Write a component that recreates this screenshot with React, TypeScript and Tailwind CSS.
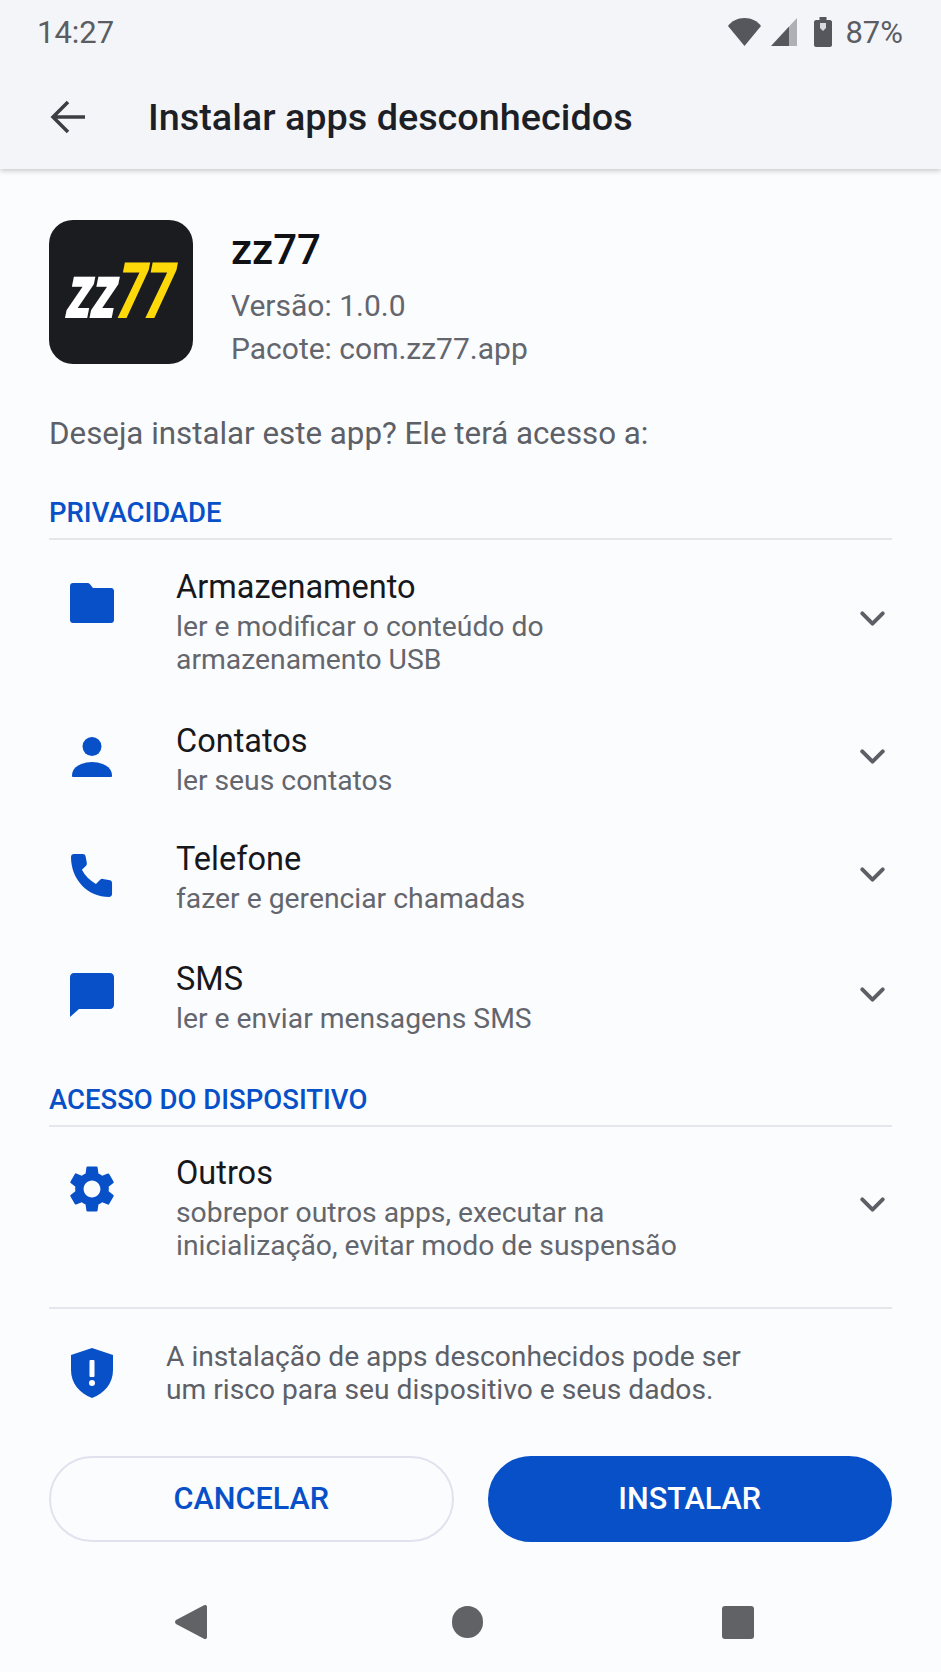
import { ChevronDown } from 'lucide-react';
import type { ReactNode } from 'react';

const FolderIcon = () => (
  <svg viewBox="0 0 44 40" className="w-[44px] h-[40px] fill-[#0750c8]">
    <path d="M3 0h14.5c1 0 1.700.3 2.300 1l3.200 4h18c1.700 0 3 1.300 3 3v29c0 1.700-1.300 3-3 3H3c-1.700 0-3-1.300-3-3V3c0-1.700 1.300-3 3-3z" />
  </svg>
);

const PersonIcon = () => (
  <svg viewBox="0 0 40 40" className="w-[40px] h-[40px] fill-[#0750c8]">
    <circle cx="20" cy="9.500" r="9.500" />
    <path d="M0 38c0-8 10-13 20-13s20 5 20 13v1c0 .5-.5 1-1 1H1c-.5 0-1-.5-1-1z" />
  </svg>
);

const PhoneIcon = () => (
  <svg viewBox="0 0 44 44" className="w-[43px] h-[43px] fill-[#0750c8]">
    <path d="M3 0h9c1.500 0 2.600.9 2.900 2.300l1.300 7c.2 1-.1 1.900-.8 2.700l-4.200 4.200c3 6 8 11 14.300 14.400l4.300-4.300c.8-.7 1.800-1 2.800-.8l7.300 1.400c1.300.3 2.100 1.300 2.100 2.700V41c0 1.700-1.300 3-3 3C17.500 44 0 26.500 0 3c0-1.700 1.300-3 3-3z" />
  </svg>
);

const MessageIcon = () => (
  <svg viewBox="0 0 44 44" className="w-[44px] h-[44px] fill-[#0750c8]">
    <path d="M4 0h36c2.300 0 4 1.700 4 4v28c0 2.300-1.700 4-4 4H9l-9 8V4c0-2.300 1.700-4 4-4z" />
  </svg>
);

const GearIcon = () => (
  <svg viewBox="0 0 24 24" className="w-[56px] h-[56px] fill-[#0750c8]">
    <path d="M19.140 12.940c.04-.3.060-.61.060-.94 0-.32-.02-.64-.07-.94l2.030-1.580c.18-.14.230-.41.120-.61l-1.920-3.320c-.12-.22-.37-.29-.59-.22l-2.390.96c-.5-.38-1.030-.7-1.620-.94l-.36-2.540c-.04-.24-.24-.41-.48-.41h-3.840c-.24 0-.43.170-.47.410l-.36 2.540c-.59.240-1.130.570-1.620.94l-2.390-.96c-.22-.08-.47 0-.59.220L2.740 8.870c-.12.210-.08.470.120.610l2.030 1.580c-.05.300-.09.630-.09.940s.02.640.07.940l-2.030 1.580c-.18.140-.23.410-.12.610l1.920 3.320c.12.220.37.290.59.220l2.390-.96c.5.380 1.030.7 1.620.94l.36 2.540c.05.240.240.410.480.410h3.840c.24 0 .44-.17.470-.41l.36-2.540c.59-.24 1.130-.56 1.620-.94l2.390.96c.22.080.47 0 .59-.22l1.920-3.320c.12-.22.070-.47-.12-.61l-2.010-1.580zM12 15.600c-1.980 0-3.600-1.620-3.600-3.600s1.620-3.600 3.600-3.600 3.600 1.620 3.600 3.600-1.620 3.600-3.600 3.600z" />
  </svg>
);

const ShieldIcon = () => (
  <svg viewBox="0 0 42 50" className="w-[42px] h-[50px]">
    <path className="fill-[#0750c8]" d="M21 0 42 7v15c0 13-8.500 23.500-21 28C8.500 45.500 0 35 0 22V7z" />
    <rect x="18.500" y="12" width="5" height="17" rx="1" fill="#fff" />
    <circle cx="21" cy="35" r="3" fill="#fff" />
  </svg>
);

type Permission = {
  icon: ReactNode;
  title: string;
  lines: string[];
  className: string;
};

const privacy: Permission[] = [
  {
    icon: <FolderIcon />,
    title: 'Armazenamento',
    lines: ['ler e modificar o conteúdo do', 'armazenamento USB'],
    className: 'mb-[45px]',
  },
  { icon: <PersonIcon />, title: 'Contatos', lines: ['ler seus contatos'], className: 'mb-[42px]' },
  { icon: <PhoneIcon />, title: 'Telefone', lines: ['fazer e gerenciar chamadas'], className: 'mb-[44px]' },
  { icon: <MessageIcon />, title: 'SMS', lines: ['ler e enviar mensagens SMS'], className: 'mb-[48px]' },
];

const device: Permission[] = [
  {
    icon: <GearIcon />,
    title: 'Outros',
    lines: ['sobrepor outros apps, executar na', 'inicialização, evitar modo de suspensão'],
    className: '',
  },
];

const PermissionRow = ({ item }: { item: Permission }) => (
  <div className={`flex items-start ${item.className}`}>
    <div className="w-[127px] shrink-0">
      <div className="w-[86px] h-[72px] flex items-center justify-center">{item.icon}</div>
    </div>
    <div className="flex-1">
      <div className="text-[32.500px] leading-[40px] text-[#17181c]">{item.title}</div>
      <div className="text-[28.300px] leading-[33px] text-[#63666d] mt-[3px]">
        {item.lines.map((line) => (
          <div key={line}>{line}</div>
        ))}
      </div>
    </div>
    <ChevronDown className="w-[41px] h-[41px] text-[#5c5f65] self-center -mt-[6px] -mr-[1px]" strokeWidth={2.3} />
  </div>
);

const SectionLabel = ({ label }: { label: string }) => (
  <div className="text-[27.500px] leading-[34px] font-medium text-[#0750c8] pb-[8px] border-b-2 border-[#e4e6ec]">{label}</div>
);

const App = () => {
  return (
    <div className="w-[941px] h-[1672px] bg-[#fbfcfe] overflow-hidden flex flex-col font-['Roboto',sans-serif]">
      {/* status bar + app bar */}
      <div className="h-[169px] bg-[#f4f5f9] shadow-[0_2px_5px_rgba(0,0,0,0.2)] shrink-0">
        <div className="h-[66px] pl-[37px] pr-[38px] flex items-center justify-between text-[31px] text-[#5b5d63]">
          <span>14:27</span>
          <div className="flex items-center -mt-[2px]">
            <svg viewBox="0 0 34 28" className="w-[35px] h-[28px] fill-[#55575d] mr-[9px]">
              <path d="M17 28 .5 8C4 3 10 0 17 0s13 3 16.500 8z" />
            </svg>
            <svg viewBox="0 0 26 28" className="w-[26px] h-[28px] mr-[17px]">
              <path d="M26 0v28h-8V8.500z" fill="#aeb0b5" />
              <path d="M18 8.500 0 28h18z" fill="#55575d" />
            </svg>
            <svg viewBox="0 0 18 30" className="w-[18px] h-[30px] mr-[13px]">
              <path d="M5.500 0h7v3H16c1 0 2 1 2 2v23c0 1-1 2-2 2H2c-1 0-2-1-2-2V5c0-1 1-2 2-2h3.500z" fill="#55575d" />
              <path d="M6 6h6v5l-3 3-3-3z" fill="#d8dade" />
            </svg>
            <span className="mt-[2px]">87%</span>
          </div>
        </div>
        <div className="h-[103px] flex items-center pb-[1px]">
          <svg viewBox="0 0 36 34" className="w-[36px] h-[34px] ml-[50px] fill-none stroke-[#3c3e44] stroke-[3.5]">
            <path d="M35 17H3M18 2 3 17l15 15" />
          </svg>
          <span className="ml-[62px] text-[37.800px] font-medium text-[#1d1f26]">Instalar apps desconhecidos</span>
        </div>
      </div>

      <div className="flex-1 px-[49px]">
        {/* app summary */}
        <div className="flex mt-[51px]">
          <div className="w-[144px] h-[144px] rounded-[24px] bg-[#1b1c20] flex items-center justify-center shrink-0 overflow-hidden">
            <span className="italic font-black text-[78px] leading-none tracking-[-1px] text-white scale-x-[0.65] -skew-x-[8deg] whitespace-nowrap">
              zz<span className="text-[#fdd90a]">77</span>
            </span>
          </div>
          <div className="ml-[38px] mt-[2px]">
            <div className="text-[42px] leading-[56px] font-medium text-[#101114]">zz77</div>
            <div className="text-[30px] leading-[43px] text-[#63666d] mt-[6px]">Versão: 1.0.0</div>
            <div className="text-[30px] leading-[43px] text-[#63666d]">Pacote: com.zz77.app</div>
          </div>
        </div>

        <div className="text-[31.300px] leading-[40px] text-[#5d6067] mt-[44px]">Deseja instalar este app? Ele terá acesso a:</div>

        <div className="mt-[42px]">
          <SectionLabel label="PRIVACIDADE" />
          <div className="pt-[27px]">
            {privacy.map((item) => (
              <PermissionRow key={item.title} item={item} />
            ))}
          </div>
        </div>

        <div>
          <SectionLabel label="ACESSO DO DISPOSITIVO" />
          <div className="pt-[26px] pb-[45px] border-b-2 border-[#e4e6ec]">
            {device.map((item) => (
              <PermissionRow key={item.title} item={item} />
            ))}
          </div>
        </div>

        {/* warning */}
        <div className="flex items-center mt-[31px]">
          <div className="w-[117px] shrink-0">
            <div className="w-[86px] flex justify-center">
              <ShieldIcon />
            </div>
          </div>
          <div className="text-[28.200px] leading-[33px] text-[#5d6067]">
            A instalação de apps desconhecidos pode ser
            <br />
            um risco para seu dispositivo e seus dados.
          </div>
        </div>

        {/* actions */}
        <div className="flex gap-[34px] mt-[50px]">
          <button className="flex-1 h-[86px] rounded-full border-2 border-[#e0e3ee] bg-transparent text-[30.600px] font-medium text-[#0750c8]">
            CANCELAR
          </button>
          <button className="flex-1 h-[86px] rounded-full border-2 border-[#0750c8] bg-[#0750c8] text-[30.600px] font-medium text-white">
            INSTALAR
          </button>
        </div>
      </div>

      {/* nav bar */}
      <div className="h-[100px] shrink-0 flex items-center">
        <svg viewBox="0 0 32 34" className="w-[32px] h-[34px] ml-[175px] fill-[#606266]">
          <path d="M30 0c1 0 2 .6 2 2v30c0 1.400-1 2-2 2-.5 0-1-.2-1.500-.6L1 19c-1.300-1-1.300-3 0-4L28.500.6c.5-.4 1-.6 1.500-.6z" />
        </svg>
        <div className="w-[31px] h-[32px] rounded-full bg-[#606266] ml-[245px]" />
        <div className="w-[32px] h-[33px] rounded-[3px] bg-[#606266] ml-[239px]" />
      </div>
    </div>
  );
};

export default App;
